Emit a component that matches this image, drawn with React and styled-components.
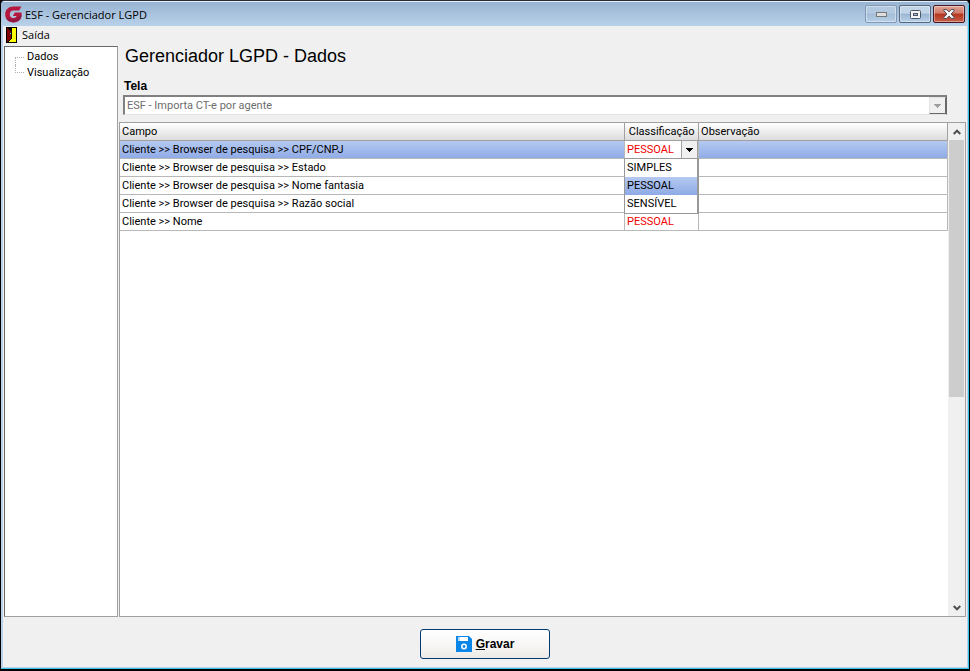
import React, { useState } from "react";
import styled, { createGlobalStyle, css } from "styled-components";

const sans = `"Liberation Sans", Arial, sans-serif`;
const body = `Roboto, "Liberation Sans", sans-serif`;
const ui = `"Open Sans", "Noto Sans", sans-serif`;

const GlobalStyle = createGlobalStyle`
  *, *::before, *::after { box-sizing: border-box; }
  body { margin: 0; background: #000; font: 11px/16px ${body}; color: #000; }
  button, input, select { font: inherit; color: inherit; margin: 0; }
`;

const Window = styled.div`
  display: flex;
  flex-direction: column;
  height: 100vh;
  min-height: 320px;
  border: 1px solid #000;
  border-top-color: #2b2b33;
  border-bottom-width: 2px;
  border-radius: 5px 5px 0 0;
  overflow: hidden;
  background: #b9d1ea;
`;

const Frame = styled.div`
  flex: 1;
  min-height: 0;
  display: flex;
  flex-direction: column;
  border: solid #38c5e8;
  border-width: 0 1px 1px 0;
  border-radius: 0 5px 0 0;
  padding: 0 1px 1px 2px;
`;

const TitleBar = styled.header`
  display: flex;
  align-items: center;
  height: 25px;
  flex: none;
  margin: 0 -1px 0 -2px;
  padding: 0 3px 0 4px;
  gap: 3px;
  border-top: 1px solid #e6f0fa;
  background: linear-gradient(#98b4d2, #b9d1ea);
`;

const TitleText = styled.h1`
  flex: 1;
  margin: 0;
  padding-top: 1px;
  font: 11px/18px ${ui};
`;

const WindowButtons = styled.div`
  display: flex;
  gap: 2px;
  align-self: flex-start;
  padding-top: 3px;
`;

const tones = {
  dim: css`
    border-color: #8299b6;
    background: linear-gradient(#b3c9e0 45%, #a3bdd8 50%, #b7cfe8);
  `,
  normal: css`
    border-color: #53687f;
    background: linear-gradient(#c1d4e8 45%, #9ab5d3 50%, #b8d0e9);
  `,
  close: css`
    border-color: #461621;
    background: linear-gradient(#e0a394, #cf7968 45%, #b5341c 50%, #c7604a);
  `,
};

const WindowButton = styled.button`
  display: grid;
  place-items: center;
  width: 32px;
  height: 18px;
  padding: 0;
  border: 1px solid;
  border-radius: 2px;
  box-shadow: inset 0 0 0 1px rgba(255, 255, 255, 0.4);
  ${(p) => tones[p.$tone]}
`;

const Client = styled.div`
  flex: 1;
  min-height: 0;
  display: flex;
  flex-direction: column;
  background: #f0f0f0;
`;

const MenuBar = styled.nav`
  flex: none;
  height: 20px;
  padding-left: 3px;
`;

const MenuButton = styled.button`
  display: flex;
  align-items: center;
  gap: 5px;
  height: 18px;
  padding: 0;
  border: 0;
  background: none;
  font-family: ${ui};
`;

const Workspace = styled.div`
  flex: 1;
  min-height: 0;
  display: flex;
  gap: 1px;
  padding: 0 1px;
`;

const Tree = styled.ul`
  flex: none;
  width: 114px;
  margin: 0;
  padding: 2px 0 0 10px;
  list-style: none;
  background: #fff;
  border: 1px solid #a0a0a0;
  border-top-color: #696969;
  border-left-color: #696969;
`;

const TreeItem = styled.li`
  display: flex;
  height: 16px;
  gap: 3px;

  &::before {
    content: "";
    width: 9px;
    height: 8px;
    border: dotted #b0b0b0;
    border-width: 0 0 1px 1px;
  }
  &:first-child::before {
    margin-top: 8px;
    border-width: 1px 0 0 1px;
  }
`;

const TreeLink = styled.a`
  color: inherit;
  text-decoration: none;
  cursor: default;
`;

const Main = styled.main`
  flex: 1;
  min-width: 0;
  display: flex;
  flex-direction: column;
`;

const Heading = styled.h2`
  margin: 0 0 10px 6px;
  font: 18px/20px ${sans};
`;

const FieldLabel = styled.label`
  margin: 2px 0 0 5px;
  font: bold 12px/16px ${sans};
`;

const ComboBox = styled.div`
  display: flex;
  height: 20px;
  margin: 1px 19px 7px 4px;
  border: 1px solid #e3e3e3;
  border-top: 2px solid #808080;
  border-left: 2px solid #808080;
  border-right-color: #696969;
  background: #fff;
`;

const ComboSelect = styled.select`
  flex: 1;
  min-width: 0;
  appearance: none;
  border: 0;
  padding: 1px 0 0 2px;
  background: transparent;
  &:disabled { color: #6d6d6d; opacity: 1; }
`;

const ComboArrow = styled.button`
  display: grid;
  place-items: center;
  width: 17px;
  padding: 0;
  border: 1px solid #696969;
  border-top-color: #e3e3e3;
  border-left-color: #e3e3e3;
  background: #f0f0f0;
`;

const GridPane = styled.section`
  flex: 1;
  min-height: 0;
  display: flex;
  border: 1px solid #a0a0a0;
  background: #fff;
`;

const GridBody = styled.div`
  flex: 1;
  min-width: 0;
`;

const Table = styled.table`
  width: 100%;
  table-layout: fixed;
  border-collapse: separate;
  border-spacing: 0;
`;

const Col = styled.col`
  width: ${(p) => p.$width};
`;

const HeadCell = styled.th`
  height: 18px;
  padding: 1px 2px 0;
  text-align: ${(p) => p.$align || "left"};
  font-weight: normal;
  line-height: 16px;
  border: solid #a0a0a0;
  border-width: 0 1px 1px 0;
  background: linear-gradient(#fff, #dcdcdc);
`;

const selected = "linear-gradient(#b5c9f1, #8eaae6)";

const Cell = styled.td`
  height: 18px;
  padding: 1px 2px 0;
  line-height: 16px;
  white-space: nowrap;
  border: solid #b8b8b8;
  border-width: 0 1px 1px 0;
  color: ${(p) => (p.$alert ? "#f00000" : "inherit")};
`;

const EditCell = styled(Cell)`
  position: relative;
  padding: 0;
  background: #fff;
`;

const Row = styled.tr`
  background: ${(p) => (p.$selected ? selected : "#fff")};
`;

const Editor = styled.div`
  display: flex;
  height: 17px;
`;

const EditorInput = styled.input`
  flex: 1;
  min-width: 0;
  padding: 1px 2px 0;
  border: 0;
  outline: 0;
  background: transparent;
  color: #f00000;
  caret-color: #000;
`;

const EditorButton = styled.button`
  display: grid;
  place-items: center;
  width: 17px;
  padding: 0;
  border: 1px solid #a0a0a0;
  border-width: 0 1px 0 1px;
  background: #f0f0f0;
`;

const Options = styled.ul`
  position: absolute;
  z-index: 1;
  top: 100%;
  left: -1px;
  right: -1px;
  margin: 0;
  padding: 0;
  list-style: none;
  border: solid #999;
  border-width: 1px 2px 1px 1px;
  background: #fff;
`;

const Option = styled.li`
  height: 18px;
  padding: 1px 2px;
  color: #000;
  background: ${(p) => (p.$selected ? selected : "none")};
`;

const ScrollBar = styled.div`
  display: flex;
  flex-direction: column;
  width: 17px;
  padding: 0 1px 0 1px;
  background: #f0f0f0;
`;

const ScrollButton = styled.button`
  display: grid;
  place-items: center;
  height: 17px;
  padding: 0;
  border: 0;
  background: none;
`;

const ScrollTrack = styled.div`
  flex: 1;
`;

const ScrollThumb = styled.div`
  height: 56%;
  background: #cdcdcd;
`;

const Footer = styled.footer`
  flex: none;
  display: flex;
  justify-content: center;
  padding: 12px 0 8px;
`;

const SaveButton = styled.button`
  display: flex;
  align-items: center;
  justify-content: center;
  gap: 4px;
  width: 130px;
  height: 30px;
  padding: 0;
  border: 1px solid #003c74;
  border-radius: 3px;
  background: linear-gradient(#fff, #f7f5f4 60%, #ece9e5);
  font: bold 12px/16px ${sans};
`;

const Logo = () => (
  <svg width="17" height="17" viewBox="0 0 17 17" aria-hidden="true">
    <path
      d="M16.400 .5 14.200 4.400H8.400C6.200 4.400 4.800 6 4.800 8.200c0 2.300 1.400 3.800 3.500 3.800 1.700 0 2.800-.7 3.200-2H7.800l2-3.400h6.800v2.200c0 4.700-3.300 7.600-8.100 7.600C3.500 16.400.2 13.200.2 8.500.2 3.700 3.500.5 8.500.5z"
      fill="#b5173d"
    />
    <path d="M.8 11.600c1.300 3 4.100 4.800 7.700 4.800 4.800 0 8.100-2.900 8.100-7.600l-3.700 2.600c-3 2-8 2.200-12.100.2z" fill="#7c1748" opacity=".6" />
  </svg>
);

const DoorIcon = () => (
  <svg width="11" height="16" viewBox="0 0 11 16" shapeRendering="crispEdges" aria-hidden="true">
    <path d="M0 0h11v16H0z" fill="#000" />
    <path d="M1 1h9v14H1z" fill="#ff0" />
    <path d="M1 1h1v1h1v1h1v1h1v8H4v1H3v1H2v1H1z" fill="#800000" />
    <path d="M2 1h4v1H2zM3 2h3v1H3zM4 3h2v1H4zM5 4h1v8H5zM4 12h1v1H4zM3 13h1v1H3zM2 14h1v1H2z" fill="#000" />
    <path d="M4 6h1v1H4z" fill="#0ff" />
  </svg>
);

const MinimizeIcon = () => (
  <svg width="11" height="5" viewBox="0 0 11 5" aria-hidden="true">
    <rect x=".5" y=".5" width="10" height="4" fill="#dedede" stroke="#777" />
  </svg>
);

const MaximizeIcon = () => (
  <svg width="11" height="9" viewBox="0 0 11 9" aria-hidden="true">
    <rect x=".5" y=".5" width="10" height="8" rx="1" fill="#f4f4f4" stroke="#4d5665" />
    <rect x="3.500" y="3.500" width="4" height="2" fill="#9fbbdc" stroke="#4d5665" />
  </svg>
);

const CloseIcon = () => (
  <svg width="12" height="10" viewBox="0 0 12 10" aria-hidden="true">
    <path
      d="M.8.6h3L6 2.900 8.200.6h3v1L8.200 5l3 3.400v1h-3L6 7.100 3.800 9.400h-3v-1L3.800 5l-3-3.400z"
      fill="#f5f5f5"
      stroke="#4d4a58"
    />
  </svg>
);

const DownArrow = ({ color }) => (
  <svg width="7" height="4" viewBox="0 0 7 4" shapeRendering="crispEdges" aria-hidden="true">
    <path d="M0 0h7v1H6v1H5v1H4v1H3V3H2V2H1V1H0z" fill={color} />
  </svg>
);

const Chevron = ({ up }) => (
  <svg width="8" height="6" viewBox="0 0 8 6" aria-hidden="true">
    <path d={up ? "M.7 5 4 1.700 7.300 5" : "M.7 1 4 4.300 7.300 1"} fill="none" stroke="#505050" strokeWidth="2" />
  </svg>
);

const FloppyIcon = () => (
  <svg width="16" height="16" viewBox="0 0 16 16" aria-hidden="true">
    <path d="M0 0h13l3 3v13H0z" fill="#0a86e8" />
    <path d="M2 1h10v4H2z" fill="#fff" />
    <path d="M2 1h2v4H2z" fill="#b8dcf8" />
    <circle cx="8" cy="10.500" r="2.200" fill="#0a86e8" stroke="#fff" strokeWidth="1.500" />
  </svg>
);

const rows = [
  { campo: "Cliente >> Browser de pesquisa >> CPF/CNPJ", editing: true },
  { campo: "Cliente >> Browser de pesquisa >> Estado" },
  { campo: "Cliente >> Browser de pesquisa >> Nome fantasia" },
  { campo: "Cliente >> Browser de pesquisa >> Razão social" },
  { campo: "Cliente >> Nome", valor: "PESSOAL" },
];

const options = ["SIMPLES", "PESSOAL", "SENSÍVEL"];

function ClassificationEditor() {
  const [value, setValue] = useState("PESSOAL");
  return (
    <EditCell>
      <Editor>
        <EditorInput
          aria-label="Classificação"
          autoFocus
          value={value}
          onFocus={(e) => e.target.setSelectionRange(value.length, value.length)}
          onChange={(e) => setValue(e.target.value)}
        />
        <EditorButton type="button" aria-label="Abrir opções">
          <DownArrow color="#000" />
        </EditorButton>
      </Editor>
      <Options role="listbox" aria-label="Classificação">
        {options.map((o) => (
          <Option key={o} role="option" aria-selected={o === value} $selected={o === value} onClick={() => setValue(o)}>
            {o}
          </Option>
        ))}
      </Options>
    </EditCell>
  );
}

export default function App() {
  return (
    <>
      <GlobalStyle />
      <Window>
        <Frame>
          <TitleBar>
            <Logo />
            <TitleText>ESF - Gerenciador LGPD</TitleText>
            <WindowButtons>
              <WindowButton $tone="dim" aria-label="Minimizar"><MinimizeIcon /></WindowButton>
              <WindowButton $tone="normal" aria-label="Maximizar"><MaximizeIcon /></WindowButton>
              <WindowButton $tone="close" aria-label="Fechar"><CloseIcon /></WindowButton>
            </WindowButtons>
          </TitleBar>
          <Client>
            <MenuBar>
              <MenuButton type="button"><DoorIcon />Saída</MenuButton>
            </MenuBar>
            <Workspace>
              <Tree>
                <TreeItem><TreeLink href="#dados">Dados</TreeLink></TreeItem>
                <TreeItem><TreeLink href="#visualizacao">Visualização</TreeLink></TreeItem>
              </Tree>
              <Main>
                <Heading>Gerenciador LGPD - Dados</Heading>
                <FieldLabel htmlFor="tela">Tela</FieldLabel>
                <ComboBox>
                  <ComboSelect id="tela" disabled>
                    <option>ESF - Importa CT-e por agente</option>
                  </ComboSelect>
                  <ComboArrow type="button" disabled aria-label="Abrir lista de telas">
                    <DownArrow color="#a0a0a0" />
                  </ComboArrow>
                </ComboBox>
                <GridPane>
                  <GridBody>
                    <Table>
                      <colgroup>
                        <Col $width="61%" />
                        <Col $width="74px" />
                        <Col $width="auto" />
                      </colgroup>
                      <thead>
                        <tr>
                          <HeadCell>Campo</HeadCell>
                          <HeadCell $align="center">Classificação</HeadCell>
                          <HeadCell>Observação</HeadCell>
                        </tr>
                      </thead>
                      <tbody>
                        {rows.map((r) => (
                          <Row key={r.campo} $selected={r.editing}>
                            <Cell>{r.campo}</Cell>
                            {r.editing ? <ClassificationEditor /> : <Cell $alert>{r.valor}</Cell>}
                            <Cell />
                          </Row>
                        ))}
                      </tbody>
                    </Table>
                  </GridBody>
                  <ScrollBar>
                    <ScrollButton type="button" aria-label="Rolar para cima"><Chevron up /></ScrollButton>
                    <ScrollTrack><ScrollThumb /></ScrollTrack>
                    <ScrollButton type="button" aria-label="Rolar para baixo"><Chevron /></ScrollButton>
                  </ScrollBar>
                </GridPane>
              </Main>
            </Workspace>
            <Footer>
              <SaveButton type="button"><FloppyIcon /><span><u>G</u>ravar</span></SaveButton>
            </Footer>
          </Client>
        </Frame>
      </Window>
    </>
  );
}
